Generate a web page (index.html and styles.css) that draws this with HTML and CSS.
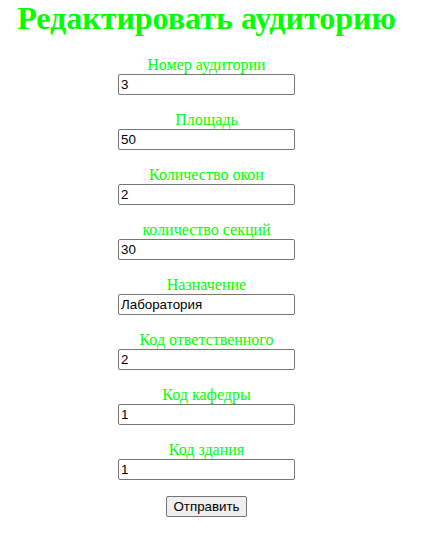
FILE: index.html
```html
<!DOCTYPE html>
<html lang="ru">
<head>
<meta charset="utf-8">
<title>Редактировать аудиторию</title>
<link rel="stylesheet" href="styles.css">
</head>
<body>
<div class="page">
  <h1 class="title">Редактировать аудиторию</h1>
  <form class="form">
    <p class="field"><label class="label">Номер аудитории</label><br><input class="input" type="text" value="3"></p>
    <p class="field"><label class="label">Площадь</label><br><input class="input" type="text" value="50"></p>
    <p class="field"><label class="label">Количество окон</label><br><input class="input" type="text" value="2"></p>
    <p class="field"><label class="label">количество секций</label><br><input class="input" type="text" value="30"></p>
    <p class="field"><label class="label">Назначение</label><br><input class="input" type="text" value="Лаборатория"></p>
    <p class="field"><label class="label">Код ответственного</label><br><input class="input" type="text" value="2"></p>
    <p class="field"><label class="label">Код кафедры</label><br><input class="input" type="text" value="1"></p>
    <p class="field"><label class="label">Код здания</label><br><input class="input" type="text" value="1"></p>
    <p class="field"><button class="button" type="submit">Отправить</button></p>
  </form>
</div>
</body>
</html>
```
FILE: styles.css
```css
html, body {
  margin: 0;
  padding: 0;
  background: #fff;
}
.page {
  width: 413px;
  font-family: "Liberation Serif", "Times New Roman", serif;
  text-align: center;
}
.title {
  margin: 0 0 19px;
  font-size: 32px;
  font-weight: bold;
  color: #00ff00;
  line-height: 37px;
}
.form {
  margin: 0;
}
.field {
  margin: 16px 0;
  font-size: 16px;
  line-height: 18px;
}
.label {
  color: #00ff00;
}
.input {
  box-sizing: border-box;
  width: 177px;
  height: 21px;
  margin: 0;
  padding: 1px 2px;
  font-family: "Liberation Sans", Arial, sans-serif;
  font-size: 13.33px;
  color: #000;
  border: 1px solid #767676;
  border-radius: 2px;
  vertical-align: top;
}
.button {
  box-sizing: border-box;
  height: 21px;
  margin: 0;
  padding: 1px 6px;
  font-family: "Liberation Sans", Arial, sans-serif;
  font-size: 13.33px;
  color: #000;
  background: #efefef;
  border: 1px solid #767676;
  border-radius: 2px;
  vertical-align: top;
}
```
